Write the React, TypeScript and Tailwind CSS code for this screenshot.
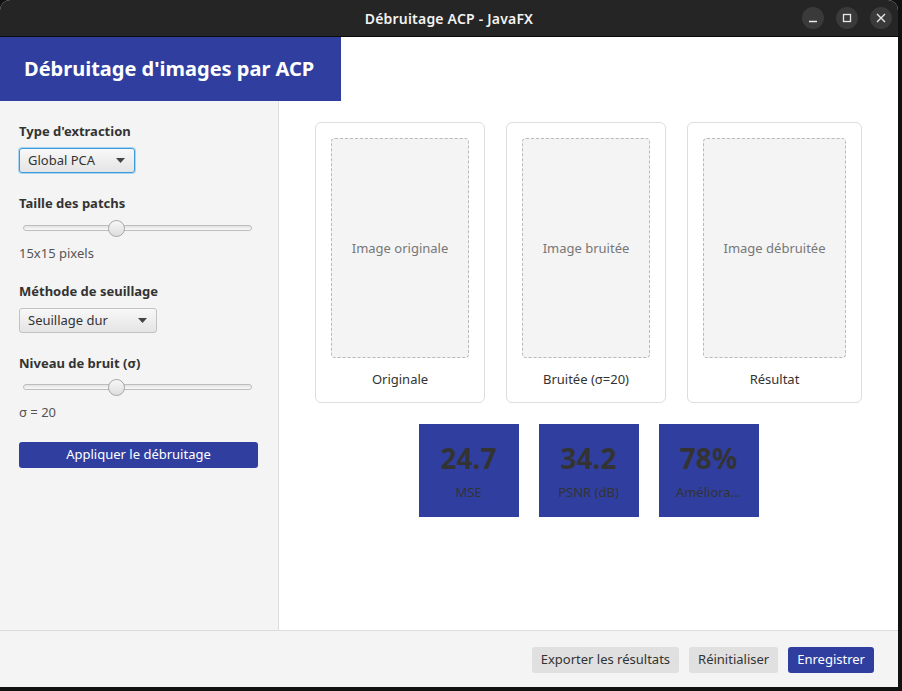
import React from "react";

function Combo({ label, width, focused }: { label: string; width: string; focused?: boolean }) {
  return (
    <div
      className={
        "flex items-center justify-between h-[25px] rounded-[3px] pl-[8px] pr-[9px] bg-gradient-to-b from-[#f8f8f8] to-[#e4e4e4] text-[13px] text-[#333] " +
        width +
        (focused
          ? " border border-[#3b9ad9] shadow-[0_0_0_1px_#a9d4f2]"
          : " border border-[#c2c2c2]")
      }
    >
      <span className="leading-none">{label}</span>
      <svg width="9" height="5" viewBox="0 0 9 5">
        <path d="M0 0 L9 0 L4.5 5 Z" fill="#444" />
      </svg>
    </div>
  );
}

function Slider({ pos }: { pos: number }) {
  return (
    <div className="relative ml-[4px] w-[229px] h-[16px] flex items-center">
      <div className="w-full h-[6px] rounded-full border border-[#bdbdbd] bg-gradient-to-b from-[#e2e2e2] to-[#fafafa]" />
      <div
        className="absolute top-0 w-[17px] h-[17px] rounded-full border border-[#a6a6a6] bg-gradient-to-b from-[#f7f7f7] to-[#dedede]"
        style={{ left: pos }}
      />
    </div>
  );
}

function ImageCard({ placeholder, label, w }: { placeholder: string; label: string; w: string }) {
  return (
    <div className="flex flex-col items-center bg-white border border-[#dddddd] rounded-[6px] p-[15px] pb-[14px]">
      <div
        className={
          "h-[220px] flex items-center justify-center pt-[2px] bg-[#f4f4f4] border border-dashed border-[#b9b9b9] rounded-[4px] text-[13px] text-[#777] " +
          w
        }
      >
        {placeholder}
      </div>
      <div className="mt-[12px] h-[18px] leading-[18px] text-[13px] text-[#333]">{label}</div>
    </div>
  );
}

function Stat({ value, label }: { value: string; label: string }) {
  return (
    <div className="w-[100px] h-[93px] bg-[#303f9f] flex flex-col items-center pt-[15px]">
      <div className="text-[28px] font-bold leading-[38px] text-[#333]">{value}</div>
      <div className="mt-[6px] text-[13px] leading-[18px] text-[#333] w-[86px] text-center truncate">{label}</div>
    </div>
  );
}

export default function App() {
  return (
    <div className="w-[902px] h-[691px] bg-[#111111] overflow-hidden font-['Noto_Sans',sans-serif]">
      <div className="w-[898px] h-[687px] flex flex-col rounded-t-[10px] overflow-hidden bg-white">
        {/* Title bar */}
        <div className="h-[37px] shrink-0 bg-[#252525] border-b border-[#0a0a0a] flex items-center relative">
          <div className="flex-1 text-center text-[14px] font-semibold tracking-[0.2px] text-[#f2f2f2]">
            Débruitage ACP - JavaFX
          </div>
          <div className="absolute right-[6px] top-[7px] flex gap-[12px]">
            <div className="w-[22px] h-[22px] rounded-full bg-[#3a3a3a] flex items-center justify-center">
              <svg width="10" height="10" viewBox="0 0 10 10">
                <path d="M1 8.5 H9" stroke="#e8e8e8" strokeWidth="1.4" />
              </svg>
            </div>
            <div className="w-[22px] h-[22px] rounded-full bg-[#3a3a3a] flex items-center justify-center">
              <svg width="10" height="10" viewBox="0 0 10 10">
                <rect x="1.5" y="1.5" width="7" height="7" fill="none" stroke="#e8e8e8" strokeWidth="1.3" />
              </svg>
            </div>
            <div className="w-[22px] h-[22px] rounded-full bg-[#3a3a3a] flex items-center justify-center">
              <svg width="10" height="10" viewBox="0 0 10 10">
                <path d="M1 1 L9 9 M9 1 L1 9" stroke="#e8e8e8" strokeWidth="1.4" />
              </svg>
            </div>
          </div>
        </div>

        {/* Header */}
        <div className="h-[64px] shrink-0 flex bg-white">
          <div className="w-[341px] bg-[#303f9f] flex items-center pl-[24px]">
            <span className="text-[20px] font-bold text-white leading-none">Débruitage d'images par ACP</span>
          </div>
        </div>

        {/* Middle */}
        <div className="flex-1 flex min-h-0">
          <div className="w-[279px] shrink-0 bg-[#f4f4f4] border-r border-[#dcdcdc] flex flex-col pl-[19px] pt-[21px] text-[13px] text-[#333]">
            <div className="font-bold leading-[18px]">Type d'extraction</div>
            <div className="mt-[8px]">
              <Combo label="Global PCA" width="w-[116px]" focused />
            </div>
            <div className="mt-[21px] font-bold leading-[18px]">Taille des patchs</div>
            <div className="mt-[8px]">
              <Slider pos={85} />
            </div>
            <div className="mt-[8px] leading-[18px] text-[#555]">15x15 pixels</div>
            <div className="mt-[20px] font-bold leading-[18px]">Méthode de seuillage</div>
            <div className="mt-[8px]">
              <Combo label="Seuillage dur" width="w-[138px]" />
            </div>
            <div className="mt-[21px] font-bold leading-[18px]">Niveau de bruit (σ)</div>
            <div className="mt-[7px]">
              <Slider pos={85} />
            </div>
            <div className="mt-[8px] leading-[18px] text-[#555]">σ = 20</div>
            <button className="mt-[21px] w-[239px] h-[26px] rounded-[3px] bg-[#303f9f] text-white text-[13px] flex items-center justify-center">
              Appliquer le débruitage
            </button>
          </div>

          <div className="flex-1 flex flex-col items-center pt-[21px] bg-white">
            <div className="flex gap-[21px]">
              <ImageCard placeholder="Image originale" label="Originale" w="w-[138px]" />
              <ImageCard placeholder="Image bruitée" label="Bruitée (σ=20)" w="w-[128px]" />
              <ImageCard placeholder="Image débruitée" label="Résultat" w="w-[143px]" />
            </div>
            <div className="mt-[21px] flex gap-[20px]">
              <Stat value="24.7" label="MSE" />
              <Stat value="34.2" label="PSNR (dB)" />
              <Stat value="78%" label="Améliora..." />
            </div>
          </div>
        </div>

        {/* Bottom bar */}
        <div className="h-[57px] shrink-0 bg-[#f4f4f4] border-t border-[#dcdcdc] flex items-center justify-end gap-[10px] pr-[24px] pt-[1px]">
          <button className="h-[26px] px-[9px] rounded-[3px] bg-[#e0e0e0] text-[13px] text-[#333]">Exporter les résultats</button>
          <button className="h-[26px] px-[9px] rounded-[3px] bg-[#e0e0e0] text-[13px] text-[#333]">Réinitialiser</button>
          <button className="h-[26px] px-[9px] rounded-[3px] bg-[#303f9f] text-[13px] text-white">Enregistrer</button>
        </div>
      </div>
    </div>
  );
}
